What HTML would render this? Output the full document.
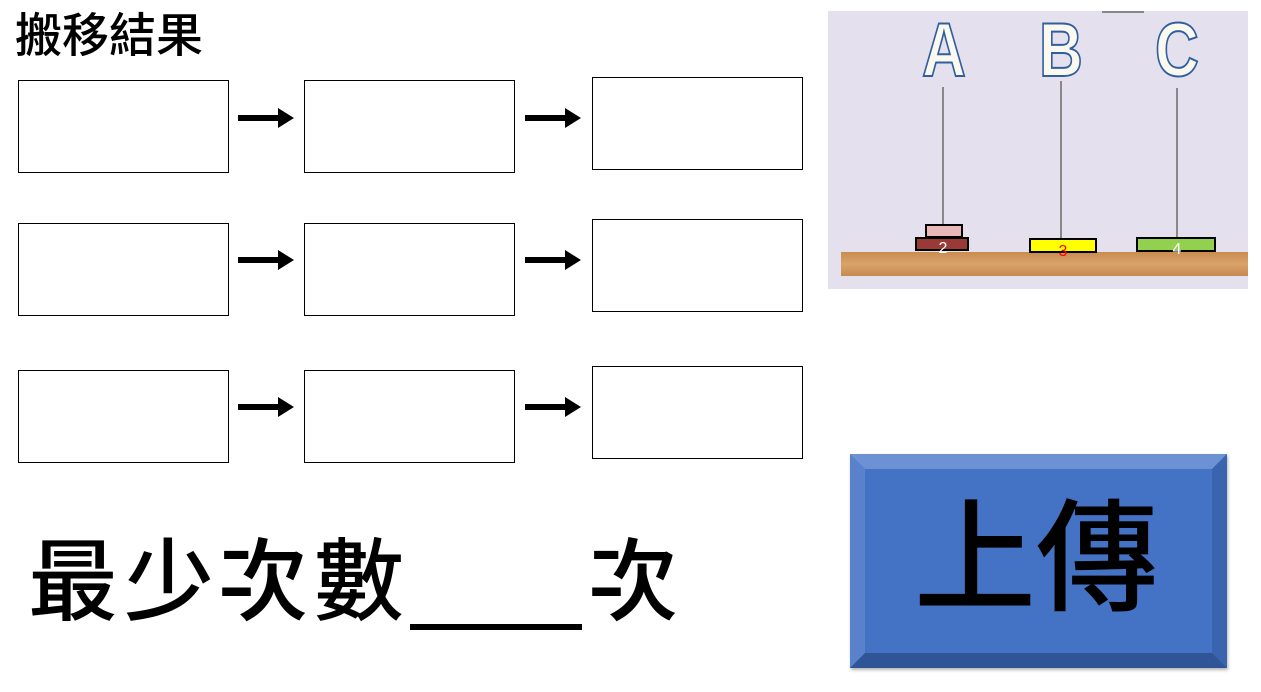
<!DOCTYPE html>
<html><head><meta charset="utf-8"><style>
body{margin:0;width:1261px;height:692px;background:#fff;position:relative;overflow:hidden;font-family:"Liberation Sans","Noto Sans CJK TC",sans-serif}
.b{position:absolute;border:1px solid #000;box-sizing:border-box}
.t{position:absolute;white-space:nowrap}
.c{position:absolute;top:528px;font-size:90px;line-height:110px;font-weight:500}
</style></head><body>
<div class="t" style="left:15px;top:10px;font-size:47px;font-weight:500;line-height:52px">搬移結果</div>
<div class="b" style="left:18px;top:80px;width:211px;height:93px"></div>
<div class="b" style="left:304px;top:80px;width:211px;height:93px"></div>
<div class="b" style="left:592px;top:77px;width:211px;height:93px"></div>
<div class="b" style="left:18px;top:223px;width:211px;height:93px"></div>
<div class="b" style="left:304px;top:223px;width:211px;height:93px"></div>
<div class="b" style="left:592px;top:219px;width:211px;height:93px"></div>
<div class="b" style="left:18px;top:370px;width:211px;height:93px"></div>
<div class="b" style="left:304px;top:370px;width:211px;height:93px"></div>
<div class="b" style="left:592px;top:366px;width:211px;height:93px"></div>
<svg style="position:absolute;left:0;top:0" width="820" height="480">
<g fill="#000">
<path d="M238 115h40v-7l16 10-16 10v-7h-40z"/>
<path d="M525 115h40v-7l16 10-16 10v-7h-40z"/>
<path d="M238 257h40v-7l16 10-16 10v-7h-40z"/>
<path d="M525 257h40v-7l16 10-16 10v-7h-40z"/>
<path d="M238 404h40v-7l16 10-16 10v-7h-40z"/>
<path d="M525 404h40v-7l16 10-16 10v-7h-40z"/>
</g></svg>
<svg style="position:absolute;left:828px;top:11px" width="420" height="278">
<rect width="420" height="278" fill="#e4e0ee"/>
<rect x="274" y="0" width="42" height="2" fill="#888"/>
<defs><linearGradient id="w" x1="0" y1="0" x2="0" y2="1"><stop offset="0" stop-color="#c98c4e"/><stop offset=".5" stop-color="#d9a36a"/><stop offset="1" stop-color="#c68a4f"/></linearGradient></defs>
<rect x="13" y="241" width="407" height="24" fill="url(#w)"/>
<g font-family="Liberation Sans" font-weight="700" font-size="76" fill="#fbf9ef" stroke="#2f5f9f" stroke-width="2" text-anchor="middle">
<text transform="translate(116,65) scale(0.8,1)">A</text><text transform="translate(233,65) scale(0.8,1)">B</text><text transform="translate(349,65) scale(0.8,1)">C</text></g>
<g stroke="#888" stroke-width="2"><line x1="115" y1="76" x2="115" y2="218"/><line x1="233" y1="70" x2="233" y2="230"/><line x1="349" y1="77" x2="349" y2="228"/></g>
<g stroke="#000" stroke-width="2">
<rect x="98" y="214" width="36" height="12" fill="#e8b8b8"/>
<rect x="88" y="227" width="52" height="12" fill="#9a3a36"/>
<rect x="202" y="228" width="66" height="13" fill="#ffff00"/>
<rect x="309" y="227" width="78" height="13" fill="#92d050"/></g>
<g font-family="Liberation Sans" font-size="16" text-anchor="middle">
<text x="115" y="242" fill="#fff">2</text><text x="235" y="245" fill="#f00">3</text><text x="349" y="243" fill="#fff">4</text></g>
</svg>
<div class="c" style="left:28px">最</div>
<div class="c" style="left:124px">少</div>
<div class="c" style="left:218px">次</div>
<div class="c" style="left:314px">數</div>
<div style="position:absolute;left:410px;top:624px;width:172px;height:6px;background:#000"></div>
<div class="c" style="left:588px">次</div>
<div style="position:absolute;left:850px;top:454px;width:377px;height:214px;background:#4472c4;box-shadow:1px 2px 3px rgba(0,0,0,.3)">
<svg style="position:absolute;left:0;top:0" width="377" height="214">
<polygon points="0,0 377,0 362,15 15,15" fill="#6d92d4"/>
<polygon points="0,0 15,15 15,199 0,214" fill="#5a82cc"/>
<polygon points="377,0 377,214 362,199 362,15" fill="#3a64ae"/>
<polygon points="0,214 15,199 362,199 377,214" fill="#2f5597"/>
</svg>
<div class="t" style="left:64px;top:30px;font-size:122px;font-weight:500;line-height:150px">上傳</div>
</div>
</body></html>
